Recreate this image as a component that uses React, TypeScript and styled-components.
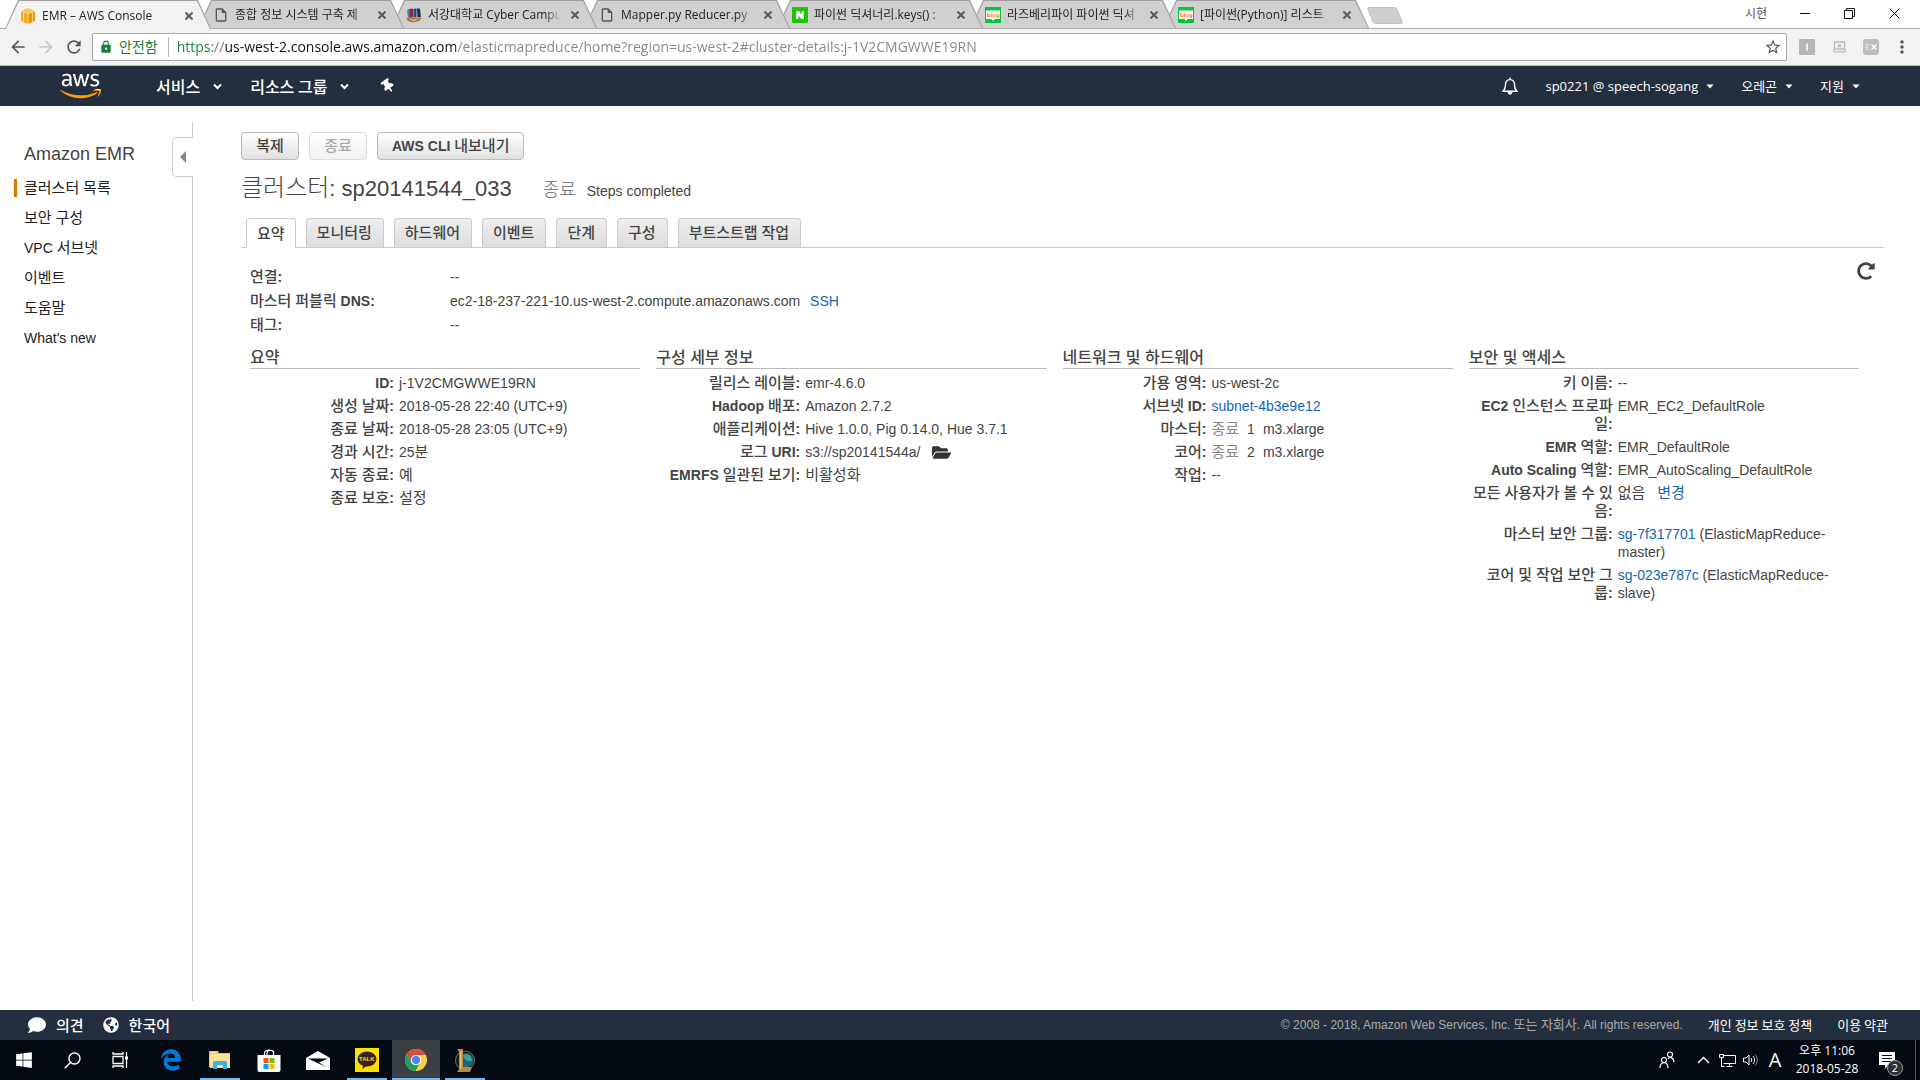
import React from 'react';
import styled, { createGlobalStyle, css } from 'styled-components';
import { FaAws, FaComment, FaEdgeLegacy, FaFolderOpen, FaGlobeAmericas, FaRedoAlt, FaThumbtack, FaWindows } from 'react-icons/fa';
import { MdArrowBack, MdArrowForward, MdLock, MdMoreVert, MdOutlineInsertDriveFile, MdRefresh, MdStarBorder } from 'react-icons/md';

const arial = `'Liberation Sans', Arial, 'Noto Sans CJK KR', sans-serif`;
const system = `'Open Sans', 'Noto Sans CJK KR', sans-serif`;
const korean = `'Noto Sans CJK KR', sans-serif`;

const Global = createGlobalStyle`
  * { box-sizing: border-box; }
  body { margin: 0; background: #fff; color: #444; font: 14px/18px ${arial}; }
  button, input { font: inherit; color: inherit; margin: 0; padding: 0; border: 0; background: none; }
  button { cursor: pointer; }
  ul, dl, dd, h1, h2, p { margin: 0; padding: 0; }
  ul { list-style: none; }
  h1, h2 { font-weight: normal; }
  a { color: inherit; text-decoration: none; }
  svg { display: block; flex: none; }
`;

const Screen = styled.div`
  display: flex;
  flex-direction: column;
  min-height: 100vh;
`;

/* Hangul runs are set one step larger than the Latin text around them,
   and in medium where the Latin text is bold. */
const Hangul = styled.span<{ $size: number }>`
  font-size: ${p => p.$size}px;
  dt &, button & { font-weight: 500; }
`;

function Mixed({ text, size = 15 }: { text: string; size?: number }) {
  const parts = text.split(/([\uAC00-\uD7A3]+)/);
  return <>{parts.map((part, i) => (i % 2 ? <Hangul key={i} $size={size}>{part}</Hangul> : part))}</>;
}

/* ---------- browser ---------- */

const TabStrip = styled.div`
  display: flex;
  height: 29px;
  padding-left: 5px;
  border-bottom: 1px solid #adadad;
  font: 12px/16px ${system};
  color: #222;
`;

const slant = 'polygon(0 100%, 13px 0, calc(100% - 13px) 0, 100% 100%)';

const BrowserTab = styled.div<{ $active?: boolean; $order: number }>`
  position: relative;
  z-index: ${p => p.$order};
  display: flex;
  align-items: center;
  gap: 6px;
  flex: none;
  width: 206px;
  height: ${p => (p.$active ? 29 : 28)}px;
  margin-right: -13px;
  padding: 2px 14px 0 15px;
  background: #a0a0a0;
  clip-path: ${slant};
  &::before {
    content: '';
    position: absolute;
    z-index: -1;
    inset: 1px 1px 0;
    background: ${p => (p.$active ? '#f2f2f2' : '#d0d0d0')};
    clip-path: ${slant};
  }
`;

const TabTitle = styled.span`
  flex: 1;
  min-width: 0;
  overflow: hidden;
  white-space: nowrap;
  mask-image: linear-gradient(to right, #000 calc(100% - 16px), transparent);
`;

const CloseTab = styled.button`
  display: grid;
  place-items: center;
  width: 16px;
  height: 16px;
  color: #5a5a5a;
`;

const NewTab = styled.button`
  width: 30px;
  height: 17px;
  margin: 7px 0 0 14px;
  background: #cfcfcf;
  border: 1px solid #c0c0c0;
  border-radius: 3px;
  transform: skewX(22deg);
`;

const WindowControls = styled.div`
  display: flex;
  align-items: center;
  margin-left: auto;
  padding-right: 3px;
  height: 27px;
  color: #111;
  button { display: grid; place-items: center; width: 45px; height: 27px; }
`;

const Profile = styled.span`
  margin-right: 15px;
  font-size: 12px;
  color: #555;
`;

const Toolbar = styled.div`
  display: flex;
  align-items: center;
  height: 37px;
  padding: 0 3px 0 8px;
  border-bottom: 1px solid #b5b5b5;
  background: #f2f2f2;
  color: #555;
`;

const ToolButton = styled.button<{ $width?: number }>`
  display: grid;
  place-items: center;
  width: ${p => p.$width ?? 28}px;
  height: 28px;
  &:disabled { color: #c9c9c9; }
`;

const Address = styled.form`
  display: flex;
  align-items: center;
  flex: 1;
  height: 28px;
  padding: 0 4px 0 6px;
  margin: 0 4px 0 8px;
  border: 1px solid #a6a6a6;
  border-radius: 2px;
  background: #fff;
  font: 14px/20px ${system};
`;

const Secure = styled.span`
  display: flex;
  align-items: center;
  gap: 6px;
  padding-right: 10px;
  border-right: 1px solid #bbb;
  color: #188038;
  white-space: nowrap;
`;

/* The scheme, host and path of the address carry different colours. */
const Url = styled.input`
  flex: 1;
  margin-left: 8px;
  outline: 0;
  color: transparent;
  background: linear-gradient(to right, #188038 34px, #777 34px 48px, #111 48px 279px, #858585 279px);
  background-clip: text;
  -webkit-background-clip: text;
`;

const Extension = styled.button`
  display: grid;
  place-items: center;
  width: 32px;
  height: 28px;
`;

/* ---------- console header ---------- */

const Nav = styled.nav`
  display: flex;
  align-items: center;
  height: 40px;
  padding: 0 60px 0 60px;
  background: #232f3e;
  color: #fff;
`;

const AwsLogo = styled(FaAws)`
  width: 41px;
  height: 34px;
  path { fill: url(#aws-tones); }
`;

const NavButton = styled.button<{ $small?: boolean }>`
  display: flex;
  align-items: center;
  white-space: nowrap;
  ${p => p.$small
    ? css`gap: 8px; font: 13px/20px ${system};`
    : css`gap: 13px; font: 500 16px/20px ${korean};`}
`;

const NavMain = styled.div`
  display: flex;
  align-items: center;
  gap: 28px;
  margin-left: 55px;
`;

const NavAccount = styled.div`
  display: flex;
  align-items: center;
  gap: 27px;
  margin-left: auto;
`;

const Pin = styled(FaThumbtack)`
  margin-left: 4px;
  transform: rotate(-35deg);
`;

/* ---------- console page ---------- */

const Page = styled.div`
  display: flex;
  flex: 1;
  padding: 16px 36px 9px 0;
`;

const Sidebar = styled.aside`
  display: flex;
  flex: none;
  width: 193px;
`;

const SideNav = styled.div`
  flex: 1;
  padding: 20px 0 0 14px;
  h2 { padding-left: 10px; font-size: 18px; line-height: 24px; }
  ul { display: grid; gap: 12px; margin-top: 13px; }
`;

const SideLink = styled.a<{ $current?: boolean }>`
  display: block;
  padding-left: 7px;
  border-left: 3px solid ${p => (p.$current ? '#e07700' : 'transparent')};
  color: #222;
`;

const SideEdge = styled.div`
  display: flex;
  flex-direction: column;
  width: 21px;
  &::before, &::after {
    content: '';
    height: 15px;
    border-right: 1px solid #ccc;
  }
  &::after { flex: 1; }
`;

const Collapse = styled.button`
  display: grid;
  place-items: center;
  height: 40px;
  border: 1px solid #ccc;
  border-right: 0;
  border-radius: 5px 0 0 5px;
  color: #888;
`;

const Main = styled.main`
  flex: 1;
  min-width: 0;
  padding: 10px 0 0 48px;
`;

const Actions = styled.div`
  display: flex;
  gap: 10px;
`;

const ActionButton = styled.button`
  min-width: 58px;
  height: 28px;
  padding: 0 14px;
  border: 1px solid #bbb;
  border-radius: 4px;
  background: linear-gradient(#fff, #e0e0e0);
  font-weight: bold;
  line-height: 24px;
  &:disabled { border-color: #ddd; background: linear-gradient(#fff, #f1f1f1); color: #aaa; }
`;

const Title = styled.div`
  display: flex;
  align-items: baseline;
  height: 30px;
  margin-top: 13px;
  line-height: 30px;
  h1 { font-size: 22px; font-weight: 300; }
`;

const State = styled.span`
  margin: 0 11px 0 31px;
  font-size: 18px;
  font-weight: 300;
  color: #666;
`;

const Tabs = styled.div`
  display: flex;
  align-items: flex-end;
  gap: 10px;
  margin-top: 15px;
  padding-left: 5px;
  border-bottom: 1px solid #ccc;
`;

const Tab = styled.button<{ $active?: boolean }>`
  height: 29px;
  padding: 0 11px 0 10px;
  border: 1px solid #ccc;
  border-bottom: 0;
  border-radius: 4px 4px 0 0;
  background: linear-gradient(#eee, #ddd);
  font-weight: bold;
  white-space: nowrap;
  ${p => p.$active && css`
    height: 30px;
    margin-bottom: -1px;
    padding-right: 10px;
    background: #fff;
  `}
`;

const Panel = styled.section`
  padding: 14px 25px 0 9px;
`;

const Overview = styled.div`
  display: flex;
  justify-content: space-between;
  align-items: flex-start;
`;

const Facts = styled.dl`
  display: grid;
  grid-template-columns: 200px auto;
  padding-top: 3px;
  line-height: 24px;
  dt { font-weight: bold; }
  a { margin-left: 6px; }
`;

const Refresh = styled.button`
  margin-right: -16px;
`;

const Columns = styled.div`
  display: grid;
  grid-template-columns: repeat(4, minmax(0, 1fr));
  gap: 16px;
  margin-top: 11px;
`;

const ColumnTitle = styled.h2`
  border-bottom: 1px solid #bbb;
  font: 500 16px/20px ${arial};
`;

const Details = styled.dl`
  display: grid;
  grid-template-columns: 144px 1fr;
  gap: 5px;
  padding: 5px 10px 0 0;
  dt { padding-left: 2px; font-weight: bold; text-align: right; }
`;

const Link = styled.a`
  color: #1166bb;
`;

const Muted = styled.span`
  margin-right: 8px;
  color: #888;
`;

const Count = styled.span`
  margin-right: 8px;
`;

const Bucket = styled.span`
  display: flex;
  align-items: center;
  gap: 12px;
  height: 18px;
  svg { color: #333; }
`;

const Footer = styled.footer`
  display: flex;
  align-items: center;
  height: 30px;
  padding: 0 32px 0 28px;
  background: #232f3e;
  color: #fff;
  font: 13px/20px ${korean};
`;

const FooterButton = styled.button`
  display: flex;
  align-items: center;
  gap: 10px;
  margin-right: 19px;
  font: 500 15px/20px ${korean};
`;

const Legal = styled.div`
  display: flex;
  align-items: center;
  gap: 25px;
  margin-left: auto;
  p { font-family: ${arial}; font-size: 12px; color: #aaa; }
`;

/* ---------- taskbar ---------- */

const Taskbar = styled.div`
  display: flex;
  height: 40px;
  padding-right: 4px;
  background: #040a12;
  color: #fff;
`;

const Launchers = styled.div<{ $apps?: boolean }>`
  display: flex;
  ${p => p.$apps && css`gap: 1px; margin-left: 3px;`}
`;

const Launcher = styled.button<{ $open?: boolean; $active?: boolean }>`
  display: grid;
  place-items: center;
  width: 48px;
  height: 40px;
  background: ${p => (p.$active ? '#3a3f44' : 'none')};
  ${p => p.$open && css`
    background-image: linear-gradient(#76b9ed, #76b9ed);
    background-size: ${p.$active ? 48 : 40}px 2px;
    background-position: bottom;
    background-repeat: no-repeat;
  `}
`;

const Tray = styled.div`
  display: flex;
  align-items: center;
  margin-left: auto;
`;

const TrayButton = styled.button<{ $width?: number }>`
  display: grid;
  place-items: center;
  width: ${p => p.$width ?? 24}px;
  height: 40px;
  font: 20px/24px ${system};
`;

const Clock = styled.time`
  width: 80px;
  text-align: center;
  font: 12px/18px ${system};
`;

const Notices = styled.button`
  position: relative;
  display: grid;
  place-items: center;
  width: 49px;
  height: 40px;
  padding-right: 8px;
  border-right: 1px solid #555;
`;

const Badge = styled.span`
  position: absolute;
  right: 12px;
  bottom: 4px;
  width: 16px;
  height: 16px;
  border: 1px solid #999;
  border-radius: 50%;
  background: #2c3036;
  font: 11px/14px ${system};
`;

/* ---------- drawings ---------- */

const Cross = ({ size = 8, width = 2 }: { size?: number; width?: number }) => (
  <svg width={size} height={size} viewBox="0 0 8 8"><path d="M.5.5l7 7M7.500.5l-7 7" stroke="currentColor" strokeWidth={width * 8 / size} /></svg>
);
const Chevron = () => (
  <svg width="9" height="7" viewBox="0 0 9 7"><path d="M1 1.500l3.500 3.500L8 1.500" fill="none" stroke="currentColor" strokeWidth="2" /></svg>
);
const Caret = () => <svg width="8" height="5" viewBox="0 0 8 5"><path d="M.5.5h7L4 4.500z" fill="currentColor" /></svg>;
const Bell = () => (
  <svg width="16" height="18" viewBox="0 0 16 18" fill="none" stroke="currentColor" strokeWidth="1.4">
    <path d="M1 14.200h14c-2-1.500-2.400-3-2.400-5.600C12.600 5 11 2.600 8 2.600S3.400 5 3.400 8.600C3.400 11.200 3 12.700 1 14.200zM8 .6v2" /><path d="M6.300 15.300a1.700 1.700 0 0 0 3.400 0z" fill="currentColor" />
  </svg>
);
const CubeIcon = () => (
  <svg width="16" height="16" viewBox="0 0 16 16">
    <path d="M1 3.500L8 6v10l-7-3z" fill="#f2a91c" /><path d="M15 3.500L8 6v10l7-3z" fill="#e59a14" /><path d="M1 3l7-3 7 3-7 2.600z" fill="#f7c65a" />
    <path d="M3.500 4.500v9.600M12.500 4.500v9.600M8 5v11" stroke="#fbe0a0" strokeWidth=".8" />
  </svg>
);
const CampusIcon = () => (
  <svg width="16" height="16" viewBox="0 0 16 16">
    <path d="M1 3.500L3 2l2 8-3 1.500z" fill="#3c86b8" /><path d="M3 2l4-.5V10l-3 1z" fill="#8a2f35" /><path d="M7.500 2l3-.7v8.700l-3 .5z" fill="#1d4c88" /><path d="M11 1.500h3l1 8.500-3.500.5z" fill="#17305c" />
    <path d="M0 11l4 .5 4-1 8 .5-3 3-6 1.500-5-1.500z" fill="#b0703f" /><path d="M3 12l5 .8 5-1.300-5 2.500z" fill="#f0e0cc" />
  </svg>
);
const NaverIcon = () => (
  <svg width="16" height="16" viewBox="0 0 16 16"><rect width="16" height="16" rx="1" fill="#1ec800" /><path d="M4 4h3l2.500 3.800V4H12v8H9.200L6.500 8.200V12H4z" fill="#fff" /></svg>
);
const BlogText = styled.text`
  font: bold 6px ${arial};
  fill: #f47b20;
`;
const BlogIcon = () => (
  <svg width="16" height="16" viewBox="0 0 16 16">
    <rect width="16" height="16" fill="#00c73c" /><path d="M1 3.500h14v8.500H9.500L8 14l-1.500-2H1z" fill="#fff" /><BlogText x="2" y="10">blog</BlogText>
  </svg>
);
const Restore = () => (
  <svg width="11" height="11" viewBox="0 0 11 11" fill="none" stroke="currentColor"><path d="M.5 2.500h8v8h-8zM2.500 2.500v-2h8v8h-2" /></svg>
);
const Minimise = () => <svg width="10" height="1"><rect width="10" height="1" fill="currentColor" /></svg>;
const BadgeIcon = () => (
  <svg width="16" height="16" viewBox="0 0 16 16"><rect width="16" height="16" rx="1" fill="#b5b5b5" /><path d="M8 4.500v7" stroke="#fff" strokeWidth="1.500" /></svg>
);
const CastIcon = () => (
  <svg width="13" height="12" viewBox="0 0 13 12" fill="none" stroke="#bbb" strokeWidth="1.300"><path d="M1.500 1h10v7h-10zM.5 10.800h12M.7 8v3M12.300 8v3" /><path d="M5 3.500l3 2.500M8 3.500L5 6" /></svg>
);
const ExIcon = () => (
  <svg width="16" height="16" viewBox="0 0 16 16" fill="none" stroke="#fff"><rect width="16" height="16" rx="3" fill="#bdbdbd" stroke="none" /><path d="M6.500 5.500H3v5h3.500M3 8h3" strokeOpacity=".6" /><path d="M8.500 5.500l5 5M13.500 5.500l-5 5" strokeWidth="1.500" /></svg>
);
const SearchIcon = () => (
  <svg width="17" height="17" viewBox="0 0 17 17" fill="none" stroke="currentColor" strokeWidth="1.400"><circle cx="10.500" cy="6.500" r="5.500" /><path d="M6.500 10.500L.7 16.300" /></svg>
);
const TaskViewIcon = () => (
  <svg width="17" height="16" viewBox="0 0 17 16" fill="none" stroke="currentColor" strokeWidth="1.300"><path d="M1 4.500h10v7H1zM1 0v2h10V0M1 16v-2h10v2M14.500 0v16" /><path d="M13 4.500h3v3h-3z" fill="currentColor" stroke="none" /></svg>
);
const ExplorerIcon = () => (
  <svg width="22" height="18" viewBox="0 0 22 18"><path d="M0 0h9l1 2h11v14H0z" fill="#f2c44e" /><path d="M1 3h20v14H1z" fill="#fde293" /><path d="M4 18v-6l1-2h12l1 2v6h-4v-4H8v4z" fill="#38b0e4" /><path d="M2 1h5v1H2z" fill="#f7f0d0" /></svg>
);
const StoreIcon = () => (
  <svg width="24" height="23" viewBox="0 0 24 23"><path d="M.5 6h23v15a2 2 0 0 1-2 2h-19a2 2 0 0 1-2-2z" fill="#fff" /><path d="M7.500 6V4c0-4 9-4 9 0v2M10 6V4c0-4 7-3 7 0" fill="none" stroke="#fff" strokeWidth="1.200" /><path d="M6.500 9h5v5h-5z" fill="#f25022" /><path d="M12.500 9h5v5h-5z" fill="#7fba00" /><path d="M6.500 15h5v5h-5z" fill="#00a4ef" /><path d="M12.500 15h5v5h-5z" fill="#ffb900" /></svg>
);
const MailIcon = () => (
  <svg width="24" height="19" viewBox="0 0 24 19"><path d="M0 7l12-7 12 7v12H0z" fill="#fff" /><path d="M2 7.500h20l-9 4 7 4.500z" fill="#040a12" /></svg>
);
const TalkText = styled.text`
  font: bold 6px ${arial};
  fill: #fae100;
`;
const TalkIcon = () => (
  <svg width="24" height="24" viewBox="0 0 24 24"><path d="M0 0h24v24H0z" fill="#fae100" /><ellipse cx="12" cy="11" rx="9.500" ry="7.500" fill="#3c1e1e" /><path d="M8 16l-.5 5 4-3z" fill="#3c1e1e" /><TalkText x="4" y="13">TALK</TalkText></svg>
);
const ChromeIcon = () => (
  <svg width="22" height="22" viewBox="0 0 22 22">
    <circle cx="11" cy="11" r="11" fill="#fdd045" />
    <path d="M1.500 5.500A11 11 0 0 1 20.500 5.500L21 6H11L6.700 13.500z" fill="#dd4b3e" />
    <path d="M1.500 5.500A11 11 0 0 0 10.500 22l4.800-8.500H6.700z" fill="#1a9f5c" />
    <circle cx="11" cy="11" r="5.200" fill="#fff" /><circle cx="11" cy="11" r="4.200" fill="#4688f1" />
  </svg>
);
const LeagueIcon = () => (
  <svg width="22" height="23" viewBox="0 0 22 23"><circle cx="11" cy="11.500" r="9.500" fill="#0a1620" stroke="#7d6437" strokeWidth="1.100" /><circle cx="12" cy="11.500" r="7.500" fill="#1b6873" /><path d="M9 6c5-2 9 1 9 6-3 1-8 0-9-6z" fill="#3aa0a6" /><path d="M3 0h6v18h9l-2 5H3l2-3V3z" fill="#b98a45" /><path d="M6 2h1.500v18H6z" fill="#e6c07a" /></svg>
);
const PeopleIcon = () => (
  <svg width="16" height="18" viewBox="0 0 16 18" fill="none" stroke="currentColor" strokeWidth="1.200"><circle cx="5" cy="9" r="2.500" /><path d="M1 17c0-7 8-7 8 0" /><circle cx="11" cy="3.500" r="2.500" /><path d="M9 8c2-3 6-1 6 3" /></svg>
);
const UpIcon = () => <svg width="13" height="8" viewBox="0 0 13 8" fill="none" stroke="currentColor" strokeWidth="1.400"><path d="M1 7l5.500-5.500L12 7" /></svg>;
const NetworkIcon = () => (
  <svg width="17" height="15" viewBox="0 0 17 15" fill="none" stroke="currentColor"><path d="M4.500 2.500h12v8h-12M7.500 13.500h6M10.500 10.500v3M.5 1.500h4v3h-4zM2.500 4.500v9h3" /></svg>
);
const SoundIcon = () => (
  <svg width="16" height="14" viewBox="0 0 16 14" fill="none" stroke="currentColor"><path d="M.5 5h2.500L6 2v10L3 9H.5zM8 5c1 1 1 3 0 4M10 3c2 2 2 6 0 8" /><path d="M12 1.500c3 3 3 8 0 11" strokeOpacity=".5" /></svg>
);
const NoticeIcon = () => (
  <svg width="16" height="17" viewBox="0 0 16 17"><path d="M0 0h16v13H9l-3 4v-4H0z" fill="#fff" /><path d="M3 3.500h10M3 6.500h10M3 9.500h10" stroke="#040a12" /></svg>
);
const Back = () => <svg width="6" height="12" viewBox="0 0 6 12"><path d="M6 0v12L0 6z" fill="currentColor" /></svg>;

/* ---------- content ---------- */

const doc = <MdOutlineInsertDriveFile size={16} color="#555" />;
const browserTabs: [React.ReactNode, string][] = [
  [<CubeIcon />, 'EMR – AWS Console'],
  [doc, '종합 정보 시스템 구축 제'],
  [<CampusIcon />, '서강대학교 Cyber Campus'],
  [doc, 'Mapper.py Reducer.py'],
  [<NaverIcon />, '파이썬 딕셔너리.keys() :'],
  [<BlogIcon />, '라즈베리파이 파이썬 딕셔'],
  [<BlogIcon />, '[파이썬(Python)] 리스트'],
];

const instance = (count: string) => <><Muted><Mixed text="종료" /></Muted><Count>{count}</Count>m3.xlarge</>;

const columns: { title: string; rows: [string, React.ReactNode][] }[] = [
  {
    title: '요약',
    rows: [
      ['ID:', 'j-1V2CMGWWE19RN'],
      ['생성 날짜:', '2018-05-28 22:40 (UTC+9)'],
      ['종료 날짜:', '2018-05-28 23:05 (UTC+9)'],
      ['경과 시간:', '25분'],
      ['자동 종료:', '예'],
      ['종료 보호:', '설정'],
    ],
  },
  {
    title: '구성 세부 정보',
    rows: [
      ['릴리스 레이블:', 'emr-4.6.0'],
      ['Hadoop 배포:', 'Amazon 2.7.2'],
      ['애플리케이션:', 'Hive 1.0.0, Pig 0.14.0, Hue 3.7.1'],
      ['로그 URI:', <Bucket>s3://sp20141544a/<FaFolderOpen size={19} /></Bucket>],
      ['EMRFS 일관된 보기:', '비활성화'],
    ],
  },
  {
    title: '네트워크 및 하드웨어',
    rows: [
      ['가용 영역:', 'us-west-2c'],
      ['서브넷 ID:', <Link href="#subnet">subnet-4b3e9e12</Link>],
      ['마스터:', instance('1')],
      ['코어:', instance('2')],
      ['작업:', '--'],
    ],
  },
  {
    title: '보안 및 액세스',
    rows: [
      ['키 이름:', '--'],
      ['EC2 인스턴스 프로파일:', 'EMR_EC2_DefaultRole'],
      ['EMR 역할:', 'EMR_DefaultRole'],
      ['Auto Scaling 역할:', 'EMR_AutoScaling_DefaultRole'],
      ['모든 사용자가 볼 수 있음:', <><Count><Mixed text="없음" /></Count> <Link href="#change"><Mixed text="변경" /></Link></>],
      ['마스터 보안 그룹:', <><Link href="#master">sg-7f317701</Link> (ElasticMapReduce-master)</>],
      ['코어 및 작업 보안 그룹:', <><Link href="#core">sg-023e787c</Link> (ElasticMapReduce-slave)</>],
    ],
  },
];

export default function App() {
  return (
    <Screen>
      <Global />
      <TabStrip>
        {browserTabs.map(([icon, title], i) => (
          <BrowserTab key={title} $active={i === 0} $order={10 - i}>
            {icon}
            <TabTitle>{title}</TabTitle>
            <CloseTab aria-label="탭 닫기"><Cross /></CloseTab>
          </BrowserTab>
        ))}
        <NewTab aria-label="새 탭" />
        <WindowControls>
          <Profile>시현</Profile>
          <button aria-label="최소화"><Minimise /></button>
          <button aria-label="이전 크기로"><Restore /></button>
          <button aria-label="닫기"><Cross size={11} width={1} /></button>
        </WindowControls>
      </TabStrip>
      <Toolbar>
        <ToolButton $width={20} aria-label="뒤로"><MdArrowBack size={20} /></ToolButton>
        <ToolButton $width={36} disabled aria-label="앞으로"><MdArrowForward size={20} /></ToolButton>
        <ToolButton $width={20} aria-label="새로고침"><MdRefresh size={20} /></ToolButton>
        <Address onSubmit={e => e.preventDefault()}>
          <Secure><MdLock size={14} />안전함</Secure>
          <Url aria-label="주소" defaultValue="https://us-west-2.console.aws.amazon.com/elasticmapreduce/home?region=us-west-2#cluster-details:j-1V2CMGWWE19RN" />
          <ToolButton $width={18} type="button" aria-label="북마크"><MdStarBorder size={18} /></ToolButton>
        </Address>
        <Extension aria-label="확장 프로그램 I"><BadgeIcon /></Extension>
        <Extension aria-label="화면 전송"><CastIcon /></Extension>
        <Extension aria-label="확장 프로그램 EX"><ExIcon /></Extension>
        <ToolButton $width={30} aria-label="메뉴"><MdMoreVert size={20} /></ToolButton>
      </Toolbar>

      <Nav>
        <svg width="0" height="0">
          <linearGradient id="aws-tones" gradientUnits="userSpaceOnUse" x1="0" y1="0" x2="0" y2="512">
            <stop offset="0.615" stopColor="#fff" /><stop offset="0.615" stopColor="#f90" />
          </linearGradient>
        </svg>
        <a href="#home" aria-label="AWS"><AwsLogo /></a>
        <NavMain>
          <NavButton>서비스 <Chevron /></NavButton>
          <NavButton>리소스 그룹 <Chevron /></NavButton>
          <NavButton aria-label="고정"><Pin size={14} /></NavButton>
        </NavMain>
        <NavAccount>
          <NavButton $small aria-label="알림"><Bell /></NavButton>
          <NavButton $small>sp0221 @ speech-sogang <Caret /></NavButton>
          <NavButton $small>오레곤 <Caret /></NavButton>
          <NavButton $small>지원 <Caret /></NavButton>
        </NavAccount>
      </Nav>

      <Page>
        <Sidebar>
          <SideNav>
            <h2>Amazon EMR</h2>
            <ul>
              {['클러스터 목록', '보안 구성', 'VPC 서브넷', '이벤트', '도움말', "What's new"].map((item, i) => (
                <li key={item}><SideLink href={`#${i}`} $current={i === 0}><Mixed text={item} /></SideLink></li>
              ))}
            </ul>
          </SideNav>
          <SideEdge><Collapse aria-label="메뉴 접기"><Back /></Collapse></SideEdge>
        </Sidebar>
        <Main>
          <Actions>
            <ActionButton><Mixed text="복제" /></ActionButton>
            <ActionButton disabled><Mixed text="종료" /></ActionButton>
            <ActionButton><Mixed text="AWS CLI 내보내기" /></ActionButton>
          </Actions>
          <Title>
            <h1><Mixed text="클러스터: sp20141544_033" size={24} /></h1>
            <State>종료</State>
            <span>Steps completed</span>
          </Title>
          <Tabs role="tablist">
            {['요약', '모니터링', '하드웨어', '이벤트', '단계', '구성', '부트스트랩 작업'].map((tab, i) => (
              <Tab key={tab} role="tab" aria-selected={i === 0} $active={i === 0}><Mixed text={tab} /></Tab>
            ))}
          </Tabs>
          <Panel>
            <Overview>
              <Facts>
                <dt><Mixed text="연결:" /></dt><dd>--</dd>
                <dt><Mixed text="마스터 퍼블릭 DNS:" /></dt>
                <dd>ec2-18-237-221-10.us-west-2.compute.amazonaws.com <Link href="#ssh">SSH</Link></dd>
                <dt><Mixed text="태그:" /></dt><dd>--</dd>
              </Facts>
              <Refresh aria-label="새로고침"><FaRedoAlt size={18} /></Refresh>
            </Overview>
            <Columns>
              {columns.map(column => (
                <section key={column.title}>
                  <ColumnTitle>{column.title}</ColumnTitle>
                  <Details>
                    {column.rows.map(([label, value]) => (
                      <React.Fragment key={label}>
                        <dt><Mixed text={label} /></dt>
                        <dd>{typeof value === 'string' ? <Mixed text={value} /> : value}</dd>
                      </React.Fragment>
                    ))}
                  </Details>
                </section>
              ))}
            </Columns>
          </Panel>
        </Main>
      </Page>

      <Footer>
        <FooterButton><FaComment size={18} />의견</FooterButton>
        <FooterButton><FaGlobeAmericas size={16} />한국어</FooterButton>
        <Legal>
          <p><Mixed text="© 2008 - 2018, Amazon Web Services, Inc. 또는 자회사. All rights reserved." size={13} /></p>
          <a href="#privacy">개인 정보 보호 정책</a>
          <a href="#terms">이용 약관</a>
        </Legal>
      </Footer>

      <Taskbar>
        <Launchers>
          <Launcher aria-label="시작"><FaWindows size={18} /></Launcher>
          <Launcher aria-label="검색"><SearchIcon /></Launcher>
          <Launcher aria-label="작업 보기"><TaskViewIcon /></Launcher>
        </Launchers>
        <Launchers $apps>
          <Launcher aria-label="Edge"><FaEdgeLegacy size={22} color="#0078d7" /></Launcher>
          <Launcher aria-label="파일 탐색기" $open><ExplorerIcon /></Launcher>
          <Launcher aria-label="Store"><StoreIcon /></Launcher>
          <Launcher aria-label="메일"><MailIcon /></Launcher>
          <Launcher aria-label="카카오톡" $open><TalkIcon /></Launcher>
          <Launcher aria-label="Chrome" $open $active><ChromeIcon /></Launcher>
          <Launcher aria-label="League of Legends" $open><LeagueIcon /></Launcher>
        </Launchers>
        <Tray>
          <TrayButton $width={48} aria-label="피플"><PeopleIcon /></TrayButton>
          <TrayButton aria-label="숨겨진 아이콘 표시"><UpIcon /></TrayButton>
          <TrayButton aria-label="네트워크"><NetworkIcon /></TrayButton>
          <TrayButton aria-label="볼륨"><SoundIcon /></TrayButton>
          <TrayButton aria-label="입력 언어">A</TrayButton>
          <Clock>오후 11:06<br />2018-05-28</Clock>
          <Notices aria-label="알림 센터"><NoticeIcon /><Badge>2</Badge></Notices>
        </Tray>
      </Taskbar>
    </Screen>
  );
}
